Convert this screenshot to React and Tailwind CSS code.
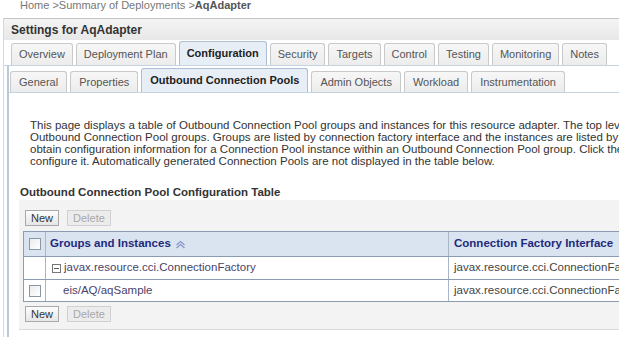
import React from "react";

const font = { fontFamily: '"Liberation Sans", Arial, sans-serif' };

const topTabs = [
  "Overview",
  "Deployment Plan",
  "Configuration",
  "Security",
  "Targets",
  "Control",
  "Testing",
  "Monitoring",
  "Notes",
];

const subTabs = [
  "General",
  "Properties",
  "Outbound Connection Pools",
  "Admin Objects",
  "Workload",
  "Instrumentation",
];

const Tab = ({ label, active, small }) => (
  <div
    className={`flex items-center ${small ? "px-[8px]" : "px-[7px]"} border border-b-0 rounded-t-[3px] whitespace-nowrap text-[11px] ${
      active
        ? "h-[24px] bg-[#e7eef6] border-[#aebfd3] text-[#222] font-bold"
        : `${small ? "h-[21px]" : "h-[22px]"} bg-gradient-to-b from-[#f7f7f7] to-[#ececec] border-[#c9c9c9] text-[#555]`
    }`}
  >
    {label}
  </div>
);

const Btn = ({ label, disabled }) => (
  <button
    className={`h-[16px] px-[5px] border text-[11px] leading-none ${
      disabled
        ? "border-[#d0d0d0] bg-[#ececec] text-[#a8a8a8]"
        : "border-[#a9a9a9] bg-gradient-to-b from-[#fdfdfd] to-[#e6e6e6] text-[#333]"
    }`}
  >
    {label}
  </button>
);

const Check = () => (
  <div className="w-[12px] h-[12px] border border-[#8d97a3] bg-gradient-to-br from-[#e9ecef] to-white" />
);

export default function App() {
  return (
    <div className="w-[619px] h-[337px] overflow-hidden bg-white" style={font}>
      <div className="h-[18px] pl-[20px] text-[11px] leading-[10px] text-[#777] whitespace-nowrap">
        Home &gt;Summary of Deployments &gt;<span className="font-bold text-[#555]">AqAdapter</span>
      </div>

      <div className="ml-[3px] border-l border-[#d8d8d8]">
        <div className="h-[22px] flex items-center pl-[7px] border-t border-[#c4c4c4] bg-gradient-to-b from-[#f4f4f4] to-[#e8e8e8] text-[12px] font-bold text-[#333] whitespace-nowrap">
          Settings for AqAdapter
        </div>

        <div className="h-[26px] flex items-end gap-[3px] pl-[7px] border-b border-[#c5d2e0]">
          {topTabs.map((t) => (
            <Tab key={t} label={t} active={t === "Configuration"} />
          ))}
        </div>

        <div className="ml-[3px] border-l-2 border-[#b9c9dc] pb-[7px]">
          <div className="h-[27px] flex items-end gap-[3px] pl-[1px] border-b border-[#c5d2e0]">
            {subTabs.map((t) => (
              <Tab key={t} label={t} small active={t === "Outbound Connection Pools"} />
            ))}
          </div>

          <div className="pl-[21px] pt-[26px] text-[11.5px] leading-[12px] text-[#333] whitespace-nowrap">
            <div>
              This page displays a table of Outbound Connection Pool groups and instances for this resource adapter. The top level of the table lists
            </div>
            <div>
              Outbound Connection Pool groups. Groups are listed by connection factory interface and the instances are listed by name.
            </div>
            <div>
              obtain configuration information for a Connection Pool instance within an Outbound Connection Pool group. Click the instance name to
            </div>
            <div>configure it. Automatically generated Connection Pools are not displayed in the table below.</div>
          </div>

          <div className="pl-[11px] pt-[19px] text-[11.5px] font-bold text-[#333] whitespace-nowrap leading-[12px]">
            Outbound Connection Pool Configuration Table
          </div>

          <div className="ml-[10px] mt-[2px] bg-[#f3f3f3] border-b border-[#dadada] pt-[10px] pb-[7px] pl-[4px]">
            <div className="flex gap-[8px] pl-[2px]">
              <Btn label="New" />
              <Btn label="Delete" disabled />
            </div>

            <div className="mt-[5px] border border-[#8c9bb0] bg-white text-[11.5px] whitespace-nowrap w-[650px]">
              <div className="flex h-[25px] bg-[#dae4f1] border-b border-[#8c9bb0]">
                <div className="w-[22px] flex items-center justify-center border-r border-[#a9b6c6]">
                  <Check />
                </div>
                <div className="w-[403px] flex items-center pl-[4px] font-bold text-[#1f2a7a] border-r border-[#a9b6c6]">
                  Groups and Instances
                  <svg width="11" height="9" viewBox="0 0 11 9" className="ml-[4px]">
                    <path d="M1.5 5 L5.5 1.5 L9.5 5 M1.5 8 L5.5 4.5 L9.5 8" fill="none" stroke="#8a97c4" strokeWidth="1.3" />
                  </svg>
                </div>
                <div className="flex-1 flex items-center pl-[5px] font-bold text-[#1f2a7a]">
                  Connection Factory Interface
                </div>
              </div>
              <div className="flex h-[23px] border-b border-[#8c9bb0]">
                <div className="w-[22px] border-r border-[#a9b6c6]" />
                <div className="w-[403px] flex items-center pl-[6px] text-[#4b3f6b] border-r border-[#a9b6c6]">
                  <span className="w-[9px] h-[9px] border border-[#777] flex items-center justify-center mr-[3px]">
                    <span className="w-[5px] h-[1px] bg-[#555]" />
                  </span>
                  javax.resource.cci.ConnectionFactory
                </div>
                <div className="flex-1 flex items-center pl-[5px] text-[#444]">javax.resource.cci.ConnectionFactory</div>
              </div>
              <div className="flex h-[21px]">
                <div className="w-[22px] flex items-center justify-center border-r border-[#a9b6c6]">
                  <Check />
                </div>
                <div className="w-[403px] flex items-center pl-[17px] text-[#4b3f6b] border-r border-[#a9b6c6]">
                  eis/AQ/aqSample
                </div>
                <div className="flex-1 flex items-center pl-[5px] text-[#444]">javax.resource.cci.ConnectionFactory</div>
              </div>
            </div>

            <div className="flex gap-[8px] pl-[2px] mt-[4px]">
              <Btn label="New" />
              <Btn label="Delete" disabled />
            </div>
          </div>
        </div>
      </div>
    </div>
  );
}
